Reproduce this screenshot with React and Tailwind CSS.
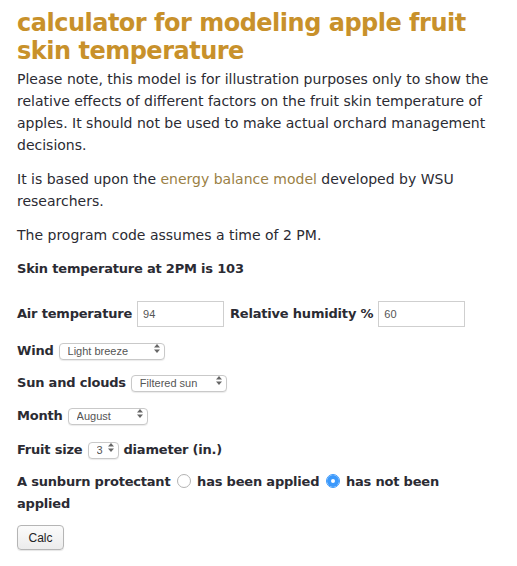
import React, { useState } from "react";

const SelectBox = ({ value, options, width, onChange }) => (
  <span className={`relative inline-block align-middle ${width}`}>
    <select
      value={value}
      onChange={(e) => onChange(e.target.value)}
      className="h-[17px] w-full appearance-none rounded-[4px] border border-[#c9c9c9] bg-white pl-[8px] pr-[14px] text-[11px] leading-[15px] font-normal tracking-normal text-[#555] font-['Liberation_Sans',sans-serif] shadow-[0_1px_1px_rgba(0,0,0,0.08)]"
    >
      {options.map((o) => (
        <option key={o}>{o}</option>
      ))}
    </select>
    <svg
      className="pointer-events-none absolute right-[5px] top-[4px]"
      width="6"
      height="9"
      viewBox="0 0 6 9"
    >
      <path d="M3 0 L6 3.5 L0 3.5 Z" fill="#666" />
      <path d="M3 9 L6 5.5 L0 5.5 Z" fill="#666" />
    </svg>
  </span>
);

const App = () => {
  const [airTemp, setAirTemp] = useState("94");
  const [humidity, setHumidity] = useState("60");
  const [wind, setWind] = useState("Light breeze");
  const [sun, setSun] = useState("Filtered sun");
  const [month, setMonth] = useState("August");
  const [size, setSize] = useState("3");
  const [protectant, setProtectant] = useState("no");

  const label = "text-[13px] font-bold tracking-[-0.2px]";
  const textInput =
    "h-[26px] w-[87px] border border-[#cfcfcf] px-[5px] text-[11px] font-normal tracking-normal text-[#555] font-['Liberation_Sans',sans-serif] outline-none";
  const radio =
    "mx-[2px] h-[14px] w-[14px] appearance-none rounded-full border border-[#b3b3b3] bg-white align-[-2px] checked:border-[#3b99fc] checked:shadow-[inset_0_0_0_4px_#3b99fc]";

  return (
    <div className="w-[517px] min-h-[566px] bg-white px-[17px] pt-[9px] text-[14px] leading-[22px] text-[#2b2b33] font-['DejaVu_Sans',sans-serif]">
      <h1 className="text-[24px] leading-[28px] font-bold text-[#c8912b] tracking-[-0.5px]">
        calculator for modeling apple fruit skin temperature
      </h1>

      <p className="mt-[3px] mb-[12px]">
        Please note, this model is for illustration purposes only to show the
        relative effects of different factors on the fruit skin temperature of
        apples. It should not be used to make actual orchard management
        decisions.
      </p>

      <p className="mb-[12px]">
        It is based upon the{" "}
        <a href="#" className="text-[#9a7f45]">
          energy balance model
        </a>{" "}
        developed by WSU researchers.
      </p>

      <p className="mb-[12px]">The program code assumes a time of 2 PM.</p>

      <p className={label}>Skin temperature at 2PM is 103</p>

      <div className={`mt-[21px] flex items-center gap-[5px] ${label}`}>
        <span>Air temperature</span>
        <input
          type="text"
          value={airTemp}
          onChange={(e) => setAirTemp(e.target.value)}
          className={textInput}
        />
        <span className="ml-[1px]">Relative humidity %</span>
        <input
          type="text"
          value={humidity}
          onChange={(e) => setHumidity(e.target.value)}
          className={textInput}
        />
      </div>

      <div className={`mt-[13px] flex items-center gap-[5px] ${label}`}>
        <span>Wind</span>
        <SelectBox
          value={wind}
          onChange={setWind}
          width="w-[106px]"
          options={["Calm", "Light breeze", "Moderate wind", "Strong wind"]}
        />
      </div>

      <div className={`mt-[10px] flex items-center gap-[5px] ${label}`}>
        <span>Sun and clouds</span>
        <SelectBox
          value={sun}
          onChange={setSun}
          width="w-[96px]"
          options={["Full sun", "Filtered sun", "Cloudy"]}
        />
      </div>

      <div className={`mt-[11px] flex items-center gap-[5px] ${label}`}>
        <span>Month</span>
        <SelectBox
          value={month}
          onChange={setMonth}
          width="w-[80px]"
          options={["June", "July", "August", "September"]}
        />
      </div>

      <div className={`mt-[12px] flex items-center gap-[5px] ${label}`}>
        <span>Fruit size</span>
        <SelectBox
          value={size}
          onChange={setSize}
          width="w-[31px]"
          options={["2", "3", "4"]}
        />
        <span>diameter (in.)</span>
      </div>

      <div className={`mt-[10px] max-w-[470px] ${label}`}>
        A sunburn protectant{" "}
        <label className="cursor-pointer">
          <input
            type="radio"
            name="protectant"
            checked={protectant === "yes"}
            onChange={() => setProtectant("yes")}
            className={radio}
          />{" "}
          has been applied
        </label>{" "}
        <label className="cursor-pointer">
          <input
            type="radio"
            name="protectant"
            checked={protectant === "no"}
            onChange={() => setProtectant("no")}
            className={radio}
          />{" "}
          has not been applied
        </label>
      </div>

      <button className="mt-[10px] h-[25px] w-[47px] rounded-[4px] border border-[#b5b5b5] bg-gradient-to-b from-[#fbfbfb] to-[#ececec] text-[12px] text-[#222] font-['Liberation_Sans',sans-serif] shadow-[0_1px_1px_rgba(0,0,0,0.1)]">
        Calc
      </button>
    </div>
  );
};

export default App;
